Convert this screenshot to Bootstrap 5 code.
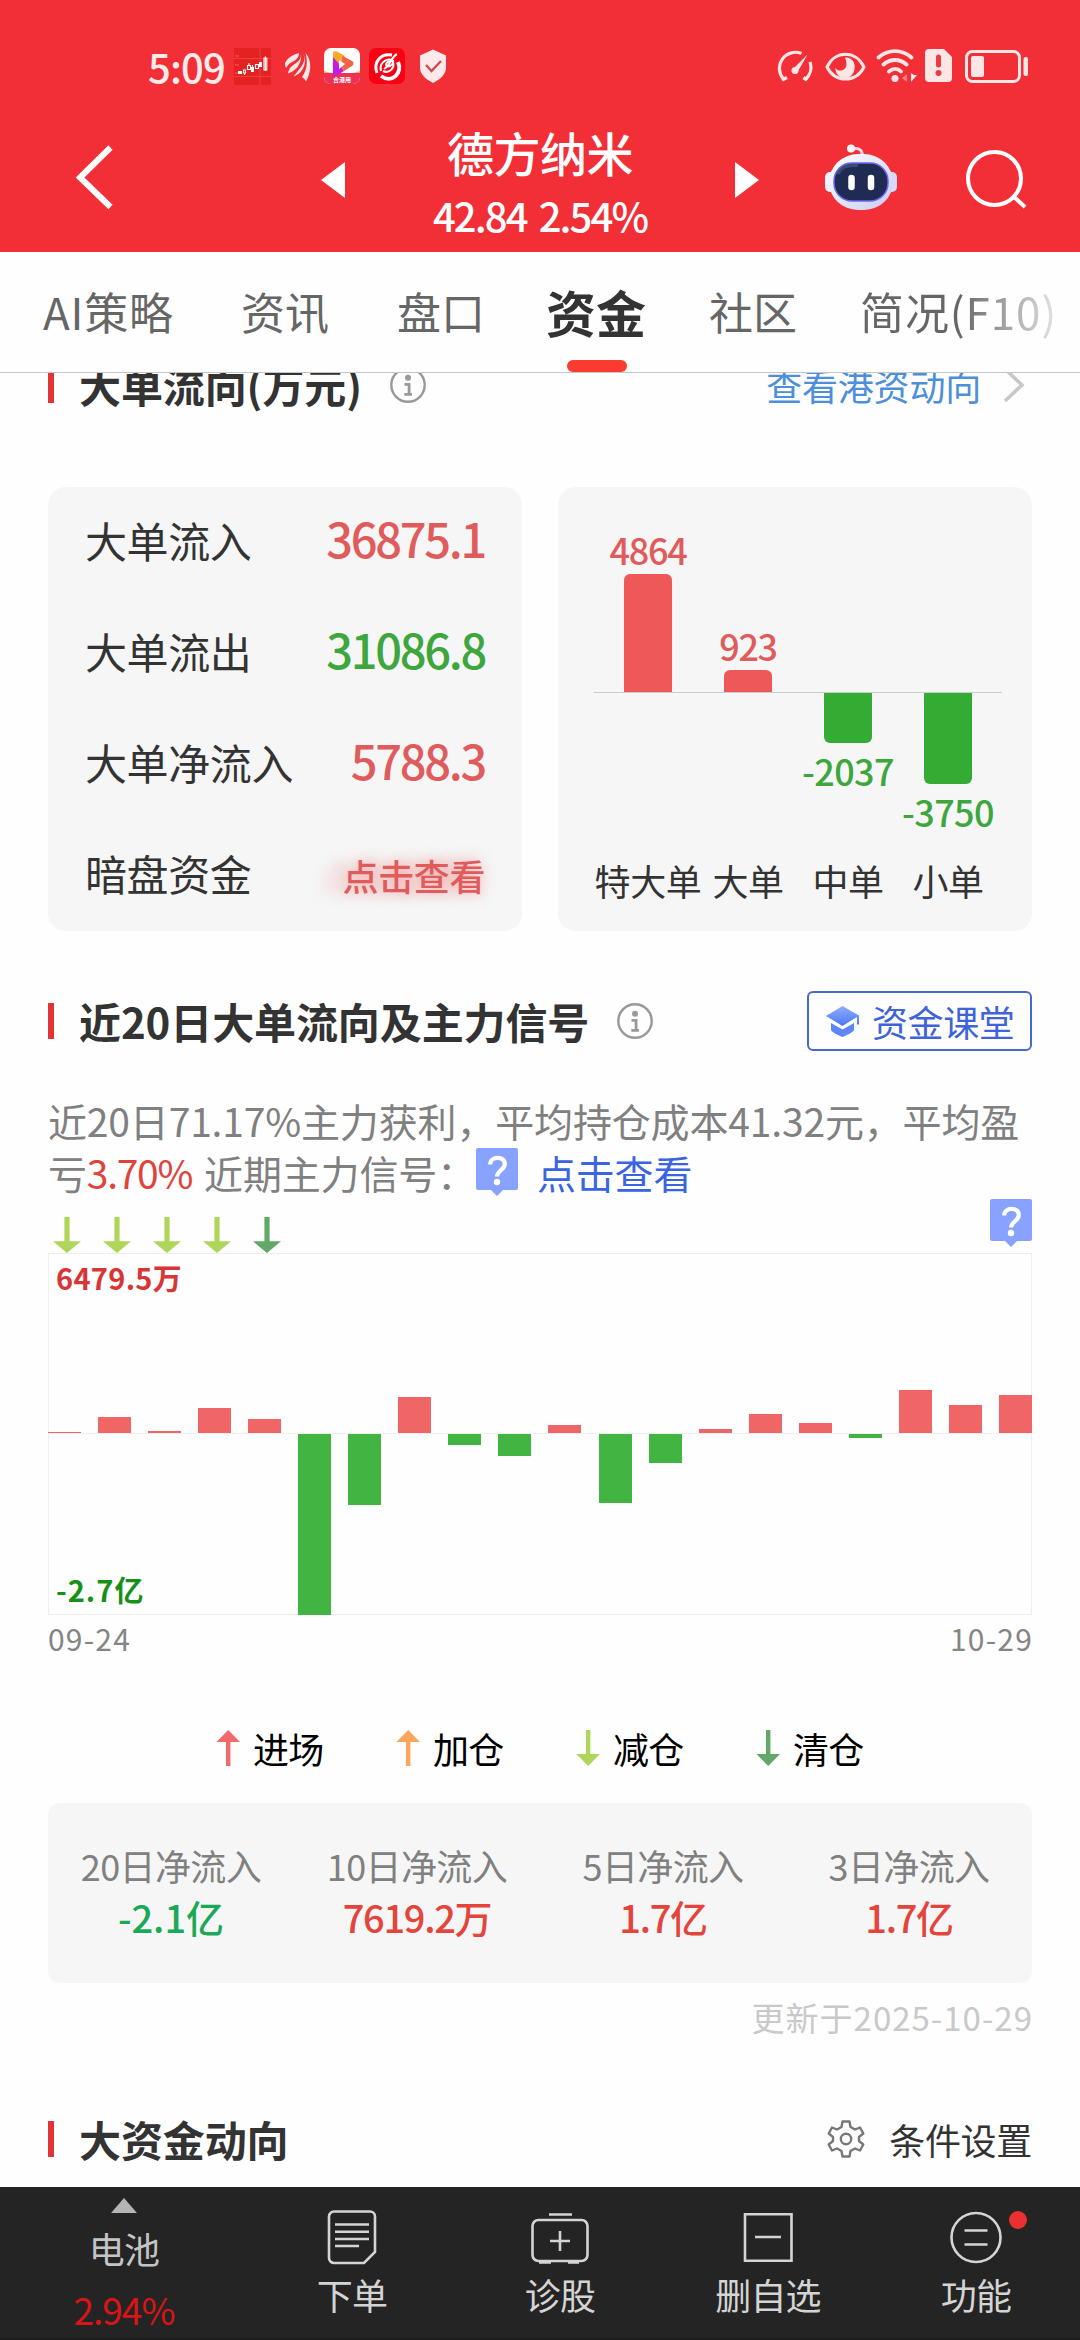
<!DOCTYPE html>
<html lang="zh-CN">
<head>
<meta charset="utf-8">
<meta name="viewport" content="width=device-width, initial-scale=1">
<title>德方纳米 - 资金</title>
<link href="https://cdn.jsdelivr.net/npm/bootstrap@5.3.0/dist/css/bootstrap.min.css" rel="stylesheet">
<style>
body{width:1080px;height:2340px;overflow:hidden;background:#fefefe;color:#333;font-family:"Noto Sans CJK SC","Noto Sans",sans-serif;font-size:36px;line-height:1}
svg{display:block;flex:none}
.top{height:252px;background:#f22f37}
.statusbar{height:84px;padding:48px 52px 0 148px;color:#ffeaea}
.clock{font-size:40px;line-height:36px;width:86px;letter-spacing:-.8px;font-weight:500}
.titlebar{height:168px;position:relative}
.stockname{font-size:47px;line-height:47px;height:47px;letter-spacing:-.5px;font-weight:500;margin-top:44px}
.price{font-size:40px;line-height:40px;margin-top:20px;letter-spacing:-1.9px;word-spacing:5px;font-weight:500;white-space:nowrap}
.tabs{height:121px;border-bottom:1px solid #c6c6c6;padding-left:43px;color:#666;font-size:44px;background:#fefefe;line-height:118px;white-space:nowrap}
.tabs .on{color:#333;font-weight:700;font-size:50px;position:relative}
.tabs .on::after{content:"";position:absolute;left:21px;bottom:0;width:60px;height:12px;border-radius:6px;background:#fb3a30}
.fade-end{background:linear-gradient(90deg,#666 50%,#e4e4e4 100%);-webkit-background-clip:text;background-clip:text;color:transparent;letter-spacing:.9px}
.main{padding:0 48px}
.sec{height:60px}
.sec h2{font-size:42px;font-weight:700;margin:0;line-height:58px;padding-left:25px;letter-spacing:-.1px;color:#333;white-space:nowrap}
.tick{width:6px;height:36px;background:#df3535}
.clip{height:72px;overflow:hidden}
.clip .sec{margin-top:-18px}
.bluelink{color:#4d8fd9;font-size:36px;letter-spacing:-.2px;line-height:58px}
.panel{background:#f6f6f6;border-radius:18px;height:444px;width:474px}
.flowrow{height:111px;padding:0 37px}
.flowrow span{font-size:42px;letter-spacing:-.4px;line-height:105px}
.flowrow b{font-size:47px;font-weight:500;letter-spacing:-2.3px;line-height:101px}
.flowrow .veil{font-size:36px;letter-spacing:-.4px;text-shadow:0 0 14px rgba(240,90,90,.5),-22px 0 14px rgba(240,90,90,.25);line-height:111px}
.r{color:#e05c5c}.g{color:#3da63d}
.mini{padding:0 34px 0 40px}
.mini .up{height:205px}.mini .down{height:145px}
.axis{height:1px;background:#ccc;margin:0 -4px}
.slot{width:100px;font-size:36px;letter-spacing:-1.3px;font-weight:500;line-height:36px;white-space:nowrap}
.slot i{display:block;width:48px}
.up i{background:#ee5858;border-radius:6px 6px 0 0;margin-top:7px}
.down i{background:#34ac34;border-radius:0 0 6px 6px;margin-bottom:9px}
.down .slot{letter-spacing:-.6px}
.cats div{width:100px;font-size:36px;letter-spacing:-.4px;line-height:50px;white-space:nowrap}
.school{width:225px;height:60px;border:2px solid #4669cb;border-radius:6px;color:#3f63d8;font-size:36px;letter-spacing:-.4px;padding-left:17px;line-height:50px}
.summary-text{font-size:39px;line-height:52px;color:#808080;letter-spacing:-.16px;margin:0;white-space:nowrap}
.sig{height:54px}
.chart{height:362px;border:1px solid #eee;position:relative}
.chart .half{height:180px}
.chart .half:first-child{height:179px}
.chart .bars{margin:0 -1px}
.bars i{display:block;width:33px}
.half.bars:first-child i{background:#f06666}
.half.bars.low i{background:#42b442}
.half.low{border-top:1px solid #f0f0f0;height:182px}
.cap1,.cap2{position:absolute;left:7px;font-size:29px;line-height:30px;font-weight:700;letter-spacing:.3px}
.cap1{top:8px;color:#d83636}.cap2{bottom:10px;color:#169016;letter-spacing:1px}
.dates{font-size:30px;color:#858585;line-height:46px;letter-spacing:1.2px}
.dates span:last-child{margin-right:-1px}
.legend-row{height:50px;padding-left:168px;color:#000}
.legend-row>div{width:180px;line-height:45px;letter-spacing:-.7px}
.sums{height:180px;border-radius:12px;background:#f6f6f6;text-align:center;white-space:nowrap}
.sums div div{line-height:52px;letter-spacing:-.6px}
.sums .lab{color:#808080}
.sums .val{font-size:38px;font-weight:500;letter-spacing:-1.3px}
.dock{height:153px;background:#242424;color:#d4d4d4;font-size:36px;border-bottom:2px solid #1c1c1c}
.dock>div{width:208px;letter-spacing:-.8px}
.dock>div:first-child{width:248px}
.dock .lbl{line-height:48px}
</style>
</head>
<body class="d-flex flex-column">
<svg width="0" height="0" class="position-absolute">
  <defs>
    <symbol id="info" viewBox="0 0 36 36"><circle cx="18" cy="18" r="16.7" fill="none" stroke="#999" stroke-width="2.4"/><circle cx="18" cy="10.8" r="3" fill="#999"/><path d="M14.5 17.3h4.6V27M14.3 27.3h7.6" fill="none" stroke="#999" stroke-width="2.8"/></symbol>
    <symbol id="down" viewBox="0 0 30 36"><path d="M12.4 0h5.2v24.3H29L15 36 1 24.3h11.4z" fill="currentColor"/></symbol>
    <symbol id="up" viewBox="0 0 24 36"><path d="M10 36h4.4V12H24L12.2 0 .4 12H10z" fill="currentColor"/></symbol>
    <symbol id="down2" viewBox="0 0 24 36"><path d="M10 0h4.4v24H24L12.2 36 .4 24H10z" fill="currentColor"/></symbol>
    <symbol id="ask" viewBox="0 0 42 48"><path d="M2 0h38a2 2 0 0 1 2 2v38a2 2 0 0 1-2 2H27l-6 6-6-6H2a2 2 0 0 1-2-2V2a2 2 0 0 1 2-2z" fill="#88a3ff"/><path d="M14.2 16.500c0-8.500 14.600-9 14.600-.5 0 6-7.800 6.500-7.800 12.500" fill="none" stroke="#fff" stroke-width="4.200"/><circle cx="21" cy="34" r="3.200" fill="#fff"/></symbol>
  </defs>
</svg>

<header class="top">
  <div class="statusbar d-flex">
    <div class="clock">5:09</div>
    <svg width="37" height="37" viewBox="0 0 37 37"><path fill="#e52222" d="M0 0h37v37H0z"/><path d="M0 10.500h37M0 28.500h37M26 0v37" stroke="#f0504c" stroke-width="1" opacity=".7"/><path d="M1 8h4M1 17h4M1 25h4" stroke="#ff8d80" stroke-width=".6"/><g fill="#fff"><path d="M4 23h4v3H4zM17 19h3v5h-3zM25 14h3v5h-3z"/></g><g fill="none" stroke="#fff" stroke-width="1.100"><path d="M9.500 22h2v3h-2zM10.500 25v2M13.500 17.500h3v4h-3zM15 15v3M18.500 17v2M21.500 16.500h3v4h-3zM30 10h2.800v12H30zM31.400 8.500V23"/></g></svg>
    <svg style="margin-left:14px" width="26" height="36" viewBox="0 0 26 36" fill="#ffe6e6"><path d="M0 15C3 9 8 7 14 5c0 4-2 6-5 8-3 1.500-6 3-8 7-1-2-1-3-1-5z"/><path d="M15.500 4.500c1.500 5-1 8-5 11C6 18 3.500 21 3 25.500c5-1.500 9-5 11-9 2-4 3-8 1.500-12z"/><path d="M17.500 4c3.500 6 1.500 12-3 17l-6 7.500c5-1.500 9.500-6 11-12 1-5 0-9-2-12.500z"/><path d="M20.500 5c6.500 7 6 19 .5 28.500-1-2-2-3-4-4.500 5-7 6-15 3.500-24z"/></svg>
    <svg style="margin-left:13px" width="36" height="36" viewBox="0 0 36 36"><defs><clipPath id="rc"><rect width="36" height="36" rx="7"/></clipPath></defs><g clip-path="url(#rc)"><path fill="#fff" d="M0 0h36v36H0z"/><path fill="#ee3156" d="M0 25h36v11H0z"/><path d="M0 23l7 2H0zM36 23l-7 2h7z" fill="#ffb13b"/><path d="M9 5c0-2 3-2 5-1l7 4-7 8-5-6z" fill="#f8a92c"/><path d="M9 9l7 8 4 6-8 5c-2 1-3 0-3-2z" fill="#c51de0"/><path d="M19 8l9 5c2 1 2 4 0 5l-8 5-4-6z" fill="#ee6548"/><path d="M15 12l6 4-6 5z" fill="#fff"/></g><text x="18" y="33.500" font-size="6" font-weight="700" fill="#fff" text-anchor="middle">合港用</text></svg>
    <svg style="margin-left:9px" width="36" height="36" viewBox="0 0 36 36"><rect width="36" height="36" rx="7" fill="#fa0013"/><g fill="none" stroke="#fff"><path d="M23 7C11 5 4 15 8 25" stroke-width="3"/><path d="M12 28c11 8 22-3 17-14" stroke-width="4"/><path d="M23 12c-7-2-13 4-11 11M14 23c6 3 12-3 10-9" stroke-width="2"/><path d="M28 6c-6 3-6 11-13 15M24 12c1 6-6 8-7 5 0-4 5-4 7-4" stroke-width="2"/></g></svg>
    <svg style="margin-left:14px" width="28" height="36" viewBox="0 0 28 36"><path d="M14 1.500l13 6v12c0 7-6 12-13 15.500C7 31.500 1 26.500 1 19.500v-12z" fill="#ffe9e9"/><path d="M7 17l5.500 6L22 13" fill="none" stroke="#d04a50" stroke-width="2.300"/></svg>
    <div class="ms-auto d-flex">
      <svg width="37" height="36" viewBox="0 0 37 36" fill="none" stroke="#ffe6e6" stroke-width="3.200"><path d="M25.500 5.500A16 16 0 0 0 7.500 31M34 14A16.500 16.500 0 0 1 29.500 31.500"/><path d="M6 32l5-2.500M31 32l-3.500-2.500" stroke-width="3.500"/><path d="M17 21L31.500 6.500 21 25z" fill="#ffe6e6" stroke="none"/><circle cx="19" cy="22.500" r="3.500" fill="#ffe6e6" stroke="none"/></svg>
      <svg style="margin-left:12px" width="41" height="36" viewBox="0 0 41 36"><path d="M2 19C10 2 31 2 39 19 31 35 10 35 2 19z" fill="none" stroke="#ffe6e6" stroke-width="3"/><path d="M20 9.500c14-1 12 21 0 20.500-5 0-10-4-9.500-10 2 4 10 3.500 11-3 0-4-1-6-1.500-7.500z" fill="#ffe6e6"/></svg>
      <svg style="margin-left:10px" width="41" height="36" viewBox="0 0 41 36" fill="none" stroke="#ffe6e6" stroke-width="3.800" stroke-linecap="round"><path d="M2.500 9.500C12 1 26 1 35.500 9.500M7.500 16.500c7-6 16-6 23 0M13 23.500c4-3.500 8.500-3.500 12 0"/><circle cx="19" cy="30.500" r="3.500" fill="#ffe6e6" stroke="none"/><path d="M26 30l5-4v8z" fill="#fb8080" stroke="none"/><path d="M35 25v9l6-7h-3z" fill="#ffe6e6" stroke="none"/></svg>
      <svg style="margin-left:8px" width="28" height="36" viewBox="0 0 28 36"><path d="M4 1h15l8 8v21a4 4 0 0 1-4 4H4a4 4 0 0 1-4-4V5a4 4 0 0 1 4-4z" fill="#ffe6e6"/><path d="M13.500 9v8" stroke="#ef3a42" stroke-width="5" stroke-linecap="round"/><circle cx="13.500" cy="25" r="3" fill="#ef3a42"/></svg>
      <svg style="margin-left:12px" width="63" height="36" viewBox="0 0 63 36"><rect x="1.500" y="3.500" width="53" height="30" rx="6" fill="none" stroke="#ffe6e6" stroke-width="3"/><rect x="6" y="8" width="13" height="21" rx="2" fill="#ffe6e6"/><rect x="58.500" y="9" width="4.500" height="19" rx="2" fill="#ffe6e6"/></svg>
    </div>
  </div>
  <div class="titlebar d-flex">
    <svg style="margin:61px 0 0 76px" width="38" height="65" viewBox="0 0 38 65"><path d="M34.500 2.500L4 32.500l30.500 29.500" fill="none" stroke="#fff" stroke-width="6"/></svg>
    <svg style="margin:78px 0 0 207px" width="24" height="36" viewBox="0 0 24 36"><path d="M24 0v36L0 18z" fill="#fff"/></svg>
    <div class="text-white text-center" style="width:390px">
      <div class="stockname">德方纳米</div>
      <div class="price">42.84 2.54%</div>
    </div>
    <svg style="margin:78px 0 0" width="24" height="36" viewBox="0 0 24 36"><path d="M0 0v36l24-18z" fill="#fff"/></svg>
    <svg style="margin:60px 0 0 66px" width="72" height="67" viewBox="0 0 72 67"><defs><linearGradient id="rb" x2="1" y2="1"><stop stop-color="#fff"/><stop offset="1" stop-color="#c9cbf3"/></linearGradient></defs><path d="M27 5c8-2 11 2 10 8" fill="none" stroke="#ffd5ec" stroke-width="3"/><circle cx="26" cy="4.500" r="4" fill="#fff"/><rect x="0" y="28" width="12" height="20" rx="5" fill="#edf1ff"/><rect x="60" y="28" width="12" height="20" rx="5" fill="#d5d9f9"/><rect x="4" y="10" width="64" height="56" rx="29" fill="url(#rb)"/><rect x="9" y="19" width="54" height="38" rx="18" fill="#1f2b52" stroke="#6e64f0" stroke-width="1.500"/><path d="M13 30c2-8 9-9 20-9" fill="none" stroke="#526b9a" stroke-width="4" opacity=".5"/><path d="M26.500 34v9M46 34v9" stroke="#fff" stroke-width="6.500" stroke-linecap="round"/></svg>
    <svg style="margin:64px 0 0 69px" width="62" height="62" viewBox="0 0 62 62" fill="none" stroke="#fff" stroke-width="4"><circle cx="28.500" cy="30.500" r="26.500"/><path d="M48 49l11 10"/></svg>
  </div>
</header>

<nav class="tabs d-flex">
  <div style="width:198px;letter-spacing:.8px">AI策略</div><div style="width:156px">资讯</div><div style="width:149px">盘口</div><div class="on" style="width:163px">资金</div><div style="width:151px">社区</div><div class="fade-end">简况(F10)</div>
</nav>

<main class="main flex-grow-1">
  <div class="clip"><div class="sec d-flex align-items-center">
    <div class="tick"></div><h2>大单流向(万元)</h2>
    <svg style="margin-left:28px" width="36" height="36"><use href="#info"/></svg>
    <div class="ms-auto d-flex align-items-center bluelink">查看港资动向<svg style="margin:0 7px 0 22px" width="22" height="36" viewBox="0 0 22 36"><path d="M2 2l17 16L2 34" fill="none" stroke="#c8c8c8" stroke-width="3.500"/></svg></div>
  </div></div>

  <div class="d-flex justify-content-between" style="margin-top:42px">
    <div class="panel">
      <div class="flowrow d-flex justify-content-between"><span>大单流入</span><b class="r">36875.1</b></div>
      <div class="flowrow d-flex justify-content-between"><span>大单流出</span><b class="g">31086.8</b></div>
      <div class="flowrow d-flex justify-content-between"><span>大单净流入</span><b class="r">5788.3</b></div>
      <div class="flowrow d-flex justify-content-between"><span>暗盘资金</span><b class="r veil">点击查看</b></div>
    </div>
    <div class="panel mini">
      <div class="up d-flex align-items-end">
        <div class="slot d-flex flex-column align-items-center r">4864<i style="height:118px"></i></div>
        <div class="slot d-flex flex-column align-items-center r">923<i style="height:22px"></i></div>
      </div>
      <div class="axis"></div>
      <div class="down d-flex justify-content-end">
        <div class="slot d-flex flex-column align-items-center g"><i style="height:50px"></i>-2037</div>
        <div class="slot d-flex flex-column align-items-center g"><i style="height:91px"></i>-3750</div>
      </div>
      <div class="cats d-flex" style="margin-top:17px"><div class="d-flex justify-content-center">特大单</div><div class="d-flex justify-content-center">大单</div><div class="d-flex justify-content-center">中单</div><div class="d-flex justify-content-center">小单</div></div>
    </div>
  </div>

  <div class="sec d-flex align-items-center" style="margin-top:60px">
    <div class="tick"></div><h2>近20日大单流向及主力信号</h2>
    <svg style="margin-left:28px" width="36" height="36"><use href="#info"/></svg>
    <div class="school ms-auto d-flex align-items-center"><svg width="33" height="31" viewBox="0 0 33 31"><defs><linearGradient id="cap" x2="0" y2="1"><stop stop-color="#8fadff"/><stop offset="1" stop-color="#4b79f5"/></linearGradient></defs><path d="M16.500 0L33 9.500v9h-2v-7.500L16.500 20 0 10z" fill="url(#cap)"/><path d="M5 17l11.500 6.500L28 17v7c0 2-9 6-11.500 7C14 30 5 26 5 24z" fill="#5d86fa"/></svg><span style="margin-left:13px">资金课堂</span></div>
  </div>

  <div style="margin-top:43px">
    <p class="summary-text">近20日71.17%主力获利，平均持仓成本41.32元，平均盈</p>
    <div class="summary-text d-flex">亏<span style="color:#e0433c;letter-spacing:-1.3px">3.70%</span><span style="margin-left:12px">近期主力信号：</span><svg style="margin:2px 19px 0 0" width="42" height="48"><use href="#ask"/></svg><span style="color:#3a64e0">点击查看</span></div>
  </div>

  <div class="sig d-flex" style="margin-top:1px">
    <div class="d-flex" style="color:#afd65b;padding:18px 0 0 4px;gap:20px">
      <svg width="30" height="36"><use href="#down"/></svg><svg width="30" height="36"><use href="#down"/></svg><svg width="30" height="36"><use href="#down"/></svg><svg width="30" height="36"><use href="#down"/></svg><svg width="30" height="36" color="#62a868"><use href="#down"/></svg>
    </div>
    <svg class="ms-auto" width="42" height="48"><use href="#ask"/></svg>
  </div>
  <div class="chart">
    <div class="half bars d-flex justify-content-between align-items-end" id="inflow"></div>
    <div class="half bars low d-flex justify-content-between align-items-start" id="outflow"></div>
    <div class="cap1">6479.5万</div><div class="cap2">-2.7亿</div>
  </div>
  <div class="dates d-flex justify-content-between"><span>09-24</span><span>10-29</span></div>

  <div class="legend-row d-flex" style="margin-top:65px">
    <div class="d-flex"><svg style="margin:4px 13px 0 0" width="24" height="36" color="#f26b6b"><use href="#up"/></svg>进场</div>
    <div class="d-flex"><svg style="margin:4px 13px 0 0" width="24" height="36" color="#fba65c"><use href="#up"/></svg>加仓</div>
    <div class="d-flex"><svg style="margin:4px 13px 0 0" width="24" height="36" color="#afd65b"><use href="#down2"/></svg>减仓</div>
    <div class="d-flex"><svg style="margin:4px 13px 0 0" width="24" height="36" color="#62a868"><use href="#down2"/></svg>清仓</div>
  </div>

  <div class="sums row g-0" style="margin-top:27px;padding-top:36px">
    <div class="col-3"><div class="lab">20日净流入</div><div class="val" style="color:#1ca856;letter-spacing:0">-2.1亿</div></div>
    <div class="col-3"><div class="lab">10日净流入</div><div class="val" style="color:#e3453c">7619.2万</div></div>
    <div class="col-3"><div class="lab">5日净流入</div><div class="val" style="color:#e3453c">1.7亿</div></div>
    <div class="col-3"><div class="lab">3日净流入</div><div class="val" style="color:#e3453c">1.7亿</div></div>
  </div>
  <div class="text-end" style="margin-top:12px;font-size:33px;line-height:44px;letter-spacing:1px;margin-right:-1px;color:#c9c9c9">更新于2025-10-29</div>

  <div class="sec d-flex align-items-center" style="margin-top:70px">
    <div class="tick"></div><h2>大资金动向</h2>
    <svg class="ms-auto" width="38" height="38" viewBox="0 0 38 38" fill="none" stroke="#777" stroke-width="2.400" stroke-linejoin="round"><path d="M15.500 1.500h7l1 5.500 4.500 2.500 5-2 3.300 6-4.300 3.500v4l4.300 3.500-3.300 6-5-2-4.500 2.500-1 5.500h-7l-1-5.500-4.500-2.500-5 2-3.300-6 4.300-3.500v-4l-4.300-3.500 3.300-6 5 2 4.500-2.500z"/><circle cx="19" cy="19" r="5.200"/></svg>
    <span style="margin-left:24px;letter-spacing:-.3px;line-height:56px">条件设置</span>
  </div>
</main>

<footer class="dock d-flex flex-shrink-0">
  <div class="d-flex flex-column align-items-center" style="color:#c4c4c4"><svg style="margin-top:11px" width="26" height="15"><path d="M13 0l13 15H0z" fill="#b4b4b4"/></svg><div style="line-height:48px;margin-top:11px">电池</div><div style="color:#d91515;font-size:37px;letter-spacing:-1px;line-height:48px;margin-top:13px">2.94%</div></div>
  <div class="d-flex flex-column align-items-center"><svg style="margin-top:22px" width="50" height="56" viewBox="0 0 50 56" fill="none" stroke="#d4d4d4" stroke-width="2.600"><path d="M7 2.500h36a5 5 0 0 1 5 5V43L37 54H7a5 5 0 0 1-5-5V7.500a5 5 0 0 1 5-5z"/><path d="M8 15.500h34M8 22.700h34M8 30h34M8 37h24"/></svg><div class="lbl" style="margin-top:5px">下单</div></div>
  <div class="d-flex flex-column align-items-center"><svg style="margin-top:22px" width="58" height="56" viewBox="0 0 58 56" fill="none" stroke="#d4d4d4" stroke-width="2.600"><rect x="1.500" y="11" width="55" height="41" rx="6"/><path d="M18 5.500h23M29 22v20M19 32h20M8 53.500h12M37 53.500h11"/></svg><div class="lbl" style="margin-top:5px">诊股</div></div>
  <div class="d-flex flex-column align-items-center"><svg style="margin-top:22px" width="50" height="56" viewBox="0 0 50 56" fill="none" stroke="#d4d4d4" stroke-width="2.600"><path d="M2 5.300h46.500v46.500H2zM12 28h26"/></svg><div class="lbl" style="margin-top:5px">删自选</div></div>
  <div class="d-flex flex-column align-items-center position-relative"><svg style="margin-top:22px" width="52" height="56" viewBox="0 0 52 56" fill="none" stroke="#d4d4d4" stroke-width="2.600"><circle cx="26" cy="28.500" r="24.500"/><path d="M14.500 21.500h23M14.500 35.500h23"/></svg><div class="lbl" style="margin-top:5px">功能</div><span class="position-absolute rounded-circle" style="left:137px;top:24px;width:18px;height:18px;background:#ea3030"></span></div>
</footer>

<script src="https://cdn.jsdelivr.net/npm/bootstrap@5.3.0/dist/js/bootstrap.bundle.min.js"></script>
<script>
// Net large-order flow per trading day, as bar height in pixels.
const flow=[1,16,2,25,14.5,-181,-71,36.5,-11,-22,8,-68.5,-29,4.5,19.5,10,-4,43,28.5,38];
inflow.innerHTML=flow.map(v=>`<i style="height:${Math.max(v,0)}px"></i>`).join('');
outflow.innerHTML=flow.map(v=>`<i style="height:${Math.max(-v,0)}px"></i>`).join('');
</script>
</body>
</html>
